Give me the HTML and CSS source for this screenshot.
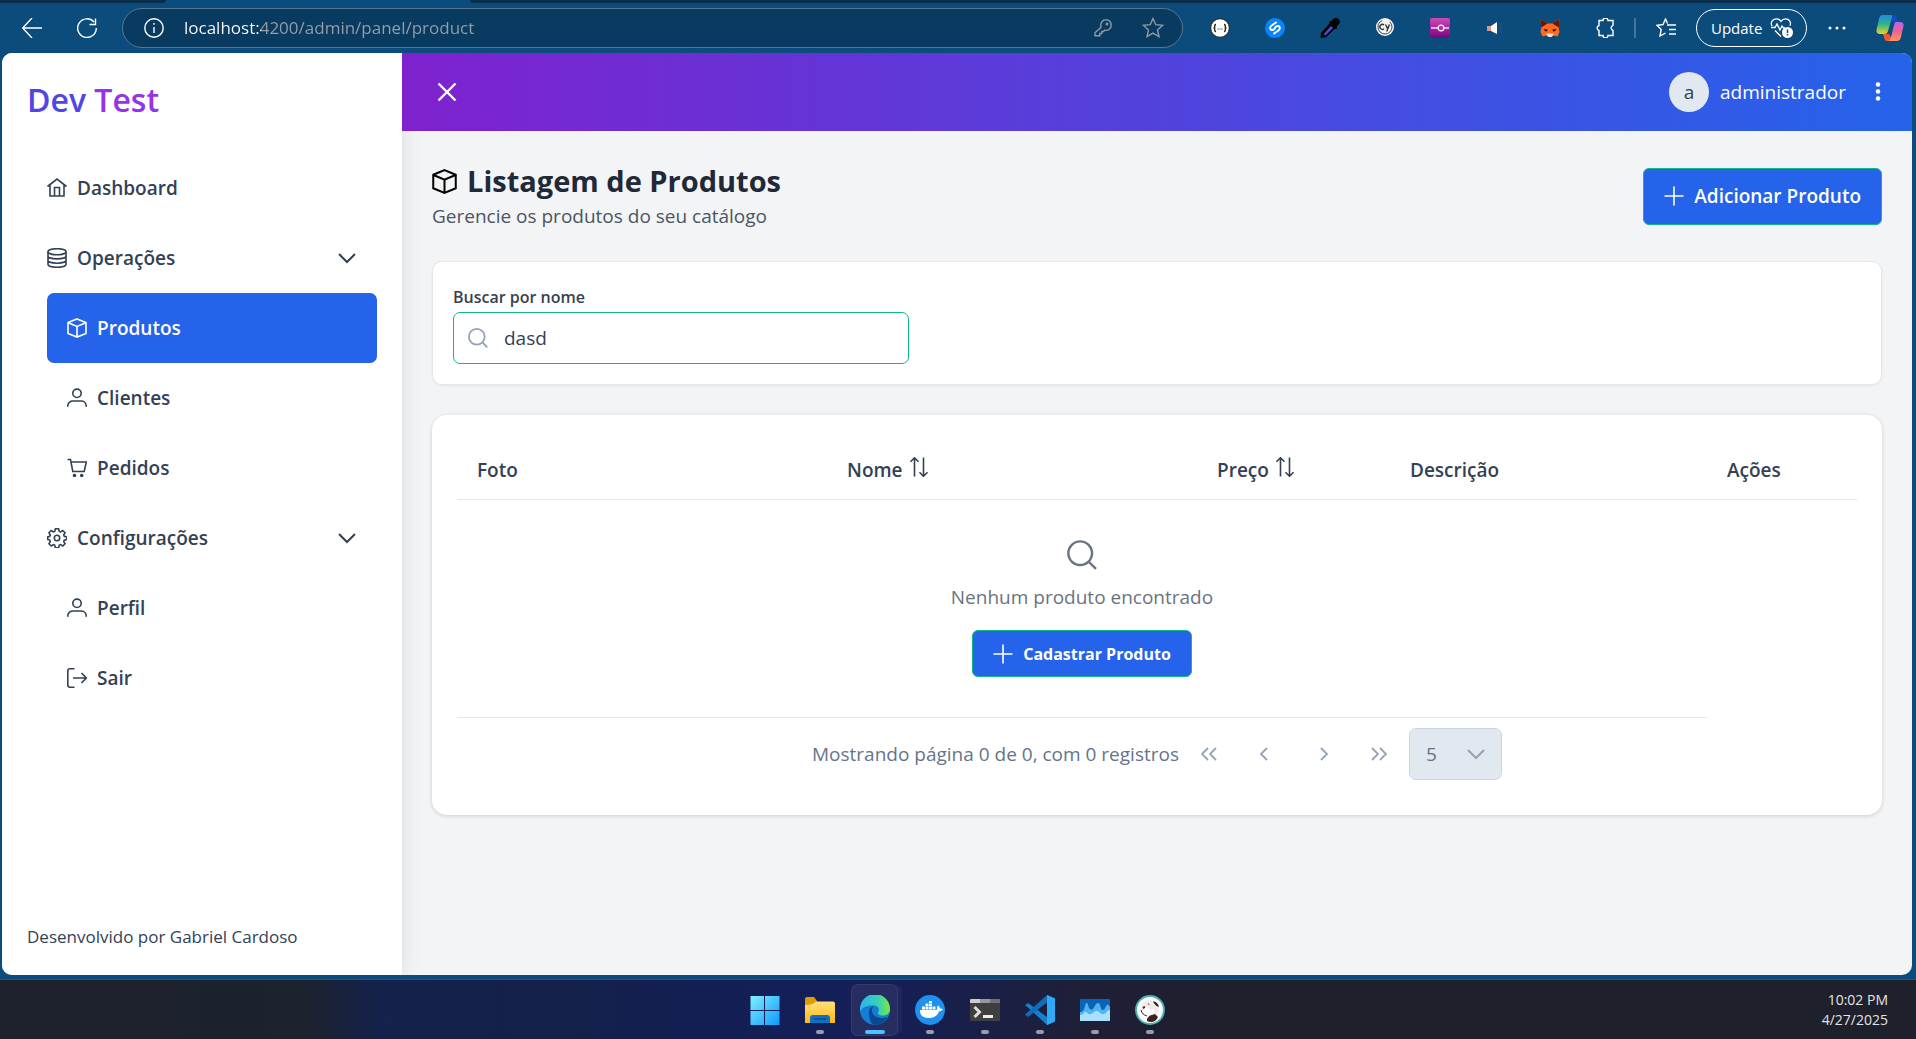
FILE: index.html
```html
<!DOCTYPE html>
<html lang="pt-BR">
<head>
<meta charset="utf-8">
<meta name="viewport" content="width=device-width, initial-scale=1">
<title>Dev Test</title>
<link rel="stylesheet" href="styles.css">
</head>
<body>
<svg class="sprite" width="0" height="0" aria-hidden="true">
  <symbol id="box" viewBox="0 0 20 20"><path d="M10 .9 19 4.6v10.8L10 19.1 1 15.4V4.6zM1.2 4.8 10 8.5l8.800-3.700M10 8.500v10.400"/></symbol>
  <symbol id="user" viewBox="0 0 20 20"><circle cx="10" cy="5.300" r="4.200"/><path d="M.8 18.800v-1c0-3 2.500-4.800 5.200-4.800h8c2.700 0 5.200 1.800 5.200 4.800v1"/></symbol>
  <symbol id="down" viewBox="0 0 20 20"><path d="m2 6 8 8 8-8"/></symbol>
  <symbol id="search" viewBox="0 0 20 20"><circle cx="8.800" cy="8.800" r="7.900"/><path d="m14.500 14.500 4.800 4.800"/></symbol>
  <symbol id="plus" viewBox="0 0 20 20"><path d="M10 .5v19M.5 10h19"/></symbol>
  <symbol id="sort" viewBox="0 0 20 20"><path d="M5.500 19.500V1M1.500 4.800l4-4 4 4M14.500.5V19M10.500 15.200l4 4 4-4"/></symbol>
</svg>

<header class="browser">
  <div class="tabs"><span class="tab-left"></span><span class="tab-right"></span></div>
  <div class="toolbar">
    <button class="tool" aria-label="Back"><svg class="line" width="20" height="20" viewBox="0 0 20 20"><path d="M10 0 .7 10 10 20M1 10h19"/></svg></button>
    <button class="tool" aria-label="Refresh"><svg class="line" width="20" height="20" viewBox="0 0 20 20"><path d="M19.300 10A9.300 9.300 0 1 1 17 4M18.500.5v6h-6"/></svg></button>
    <div class="address">
      <svg class="line" width="20" height="20" viewBox="0 0 20 20"><circle cx="10" cy="10" r="9.200"/><path d="M10 9v6M10 5v1.800"/></svg>
      <input class="url" type="text" aria-label="Address" value="localhost:4200/admin/panel/product">
      <svg class="line dim" width="18" height="18" viewBox="0 0 18 18"><path d="M7 8.200C6 4 8.500.8 12 .8a5 5 0 0 1 5.200 5.200c0 3.500-3 6-6.500 5.200L9.500 12.500H7.800v2H5.800v2.200H1v-3z"/><circle cx="13" cy="5" r=".8"/></svg>
      <svg class="line dim" width="22" height="22" viewBox="0 0 22 22"><path d="m11 1.500 2.800 6.200 6.700.7-5 4.500 1.500 6.700-6-3.500-6 3.500 1.500-6.700-5-4.500 6.700-.7z"/></svg>
    </div>
    <button class="tool" aria-label="JSON"><svg width="20" height="20" viewBox="0 0 20 20"><circle cx="10" cy="10" r="9.300" fill="#fff" stroke="#222"/><path d="M6 6.500c-2 0-1 2.500-1.300 3L4 10l.7.500c.3.500-.7 3 1.300 3M14 6.500c2 0 1 2.500 1.300 3l.7.500-.7.500c-.3.500.7 3-1.300 3" fill="none" stroke="#222" stroke-width="1.300"/><path d="M7.500 11h5" stroke="#222" stroke-dasharray="1 1"/></svg></button>
    <button class="tool" aria-label="Shazam"><svg width="20" height="20" viewBox="0 0 20 20"><circle cx="10" cy="10" r="10" fill="#0a84fb"/><path d="M11 4.500 7 7.200c-3 2-2.200 5.300.8 4.800L10 10.500M9 15.500l4-2.700c3-2 2.200-5.300-.8-4.800L10 9.500" fill="none" stroke="#fff" stroke-width="1.900" stroke-linecap="round"/></svg></button>
    <button class="tool" aria-label="Color picker"><svg width="20" height="20" viewBox="0 0 20 20"><path d="M1 19.500 1.500 15 11 4.500l5 4.500L6 18.500z" fill="#000" stroke="#000"/><path d="m4 16.500 7-8 1.500 1.500L5.500 17z" fill="#4b50d8" stroke="#4b50d8"/><path d="m9.500 4 2.500-1L14 .8q3-1.500 5 1.200 1.500 3-1 4.500l-1.500 1.500-.5 3z" fill="#000" stroke="#000"/></svg></button>
    <button class="tool" aria-label="Cypress"><svg width="20" height="20" viewBox="0 0 20 20"><circle cx="10" cy="9" r="9" fill="#f4f4f4"/><circle cx="10" cy="9" r="7" fill="none" stroke="#444" stroke-width="1" stroke-dasharray="30 8"/><path d="M9 7a2.500 2.500 0 1 0 0 3.800M10.500 6.500l2 4 2-4-2.800 7" fill="none" stroke="#333" stroke-width="1.400"/></svg></button>
    <button class="tool" aria-label="Commits"><svg width="20" height="20" viewBox="0 0 20 20"><defs><linearGradient id="pk" x2="0" y2="1"><stop stop-color="#cf49ba"/><stop offset="1" stop-color="#74077f"/></linearGradient></defs><rect width="20" height="20" rx="2" fill="url(#pk)"/><path d="M1 10h7m6 0h5" stroke="#f7d9f4" stroke-width="1.300"/><circle cx="11" cy="10" r="2.900" fill="#c02aa8" stroke="#fff" stroke-width="1.200"/></svg></button>
    <button class="tool" aria-label="Volume"><svg width="18" height="14" viewBox="0 0 18 14"><path d="M1 5h5v5H1z" fill="#d9958f"/><path d="M5 5 11 1v12L5 10z" fill="#fff"/><path d="m14 4 2-1.500M14 7h2m-2 3 2 1.500" stroke="#41556b"/></svg></button>
    <button class="tool" aria-label="MetaMask"><svg width="20" height="20" viewBox="0 0 20 20"><path d="m.5 1 7 4.500h5l7-4.500-.8 9 .8 4-2 4.500-4-1-2 1.500h-3l-2-1.500-4 1L.5 14l.8-4z" fill="#ff6a1f"/><path d="m.5 1 7 4.500-6.200 4zM19.500 1l-7 4.500 6.200 4z" fill="#6a1404"/><path d="m3.500 11 4 .5-.5 2-2-.5zM16.500 11l-4 .5.500 2 2-.5z" fill="#271506"/><path d="m6 16 2.500-.5h3L14 16l-2.500 3h-3z" fill="#e9dfd8"/></svg></button>
    <button class="tool" aria-label="Extensions"><svg class="line" width="20" height="20" viewBox="0 0 20 20"><path d="M4 2.500h4a2.500 2.500 0 0 1 5 0h5v4.800a2.600 2.600 0 0 0 0 5v5.200h-5a2.500 2.500 0 0 1-5 0H4v-5a2.600 2.600 0 0 1 0-5z"/></svg></button>
    <span class="divider"></span>
    <button class="tool" aria-label="Favorites"><svg class="line" width="20" height="20" viewBox="0 0 20 20"><path d="M11 7h9M13 11.500h7M13 16h7M11.500 5.500 9.500 1 7 6.500l-6 .8 4.200 4.200L4 18l5.500-3"/></svg></button>
    <button class="update"><span>Update</span><svg width="24" height="20" viewBox="0 0 24 20"><path d="M2 8C0 4 3 .8 6.500.8c2 0 3.500 1 4.500 2.500 1-1.500 2.500-2.500 4.500-2.500 3.500 0 6 3 4.500 7M1 9.500h4L7 6l3 6 2-4 1.500 2H15M5 12.500l6 6" fill="none" stroke="#fff" stroke-width="1.300"/><circle cx="17.500" cy="14.500" r="5.500" fill="#fff"/><path d="M17.500 11.500v3.500m0 1v1.500" stroke="#0c4c7c" stroke-width="1.500"/></svg></button>
    <button class="tool wide" aria-label="More"><svg width="18" height="4" viewBox="0 0 18 4" fill="#fff"><circle cx="2" cy="2" r="1.500"/><circle cx="9" cy="2" r="1.500"/><circle cx="16" cy="2" r="1.500"/></svg></button>
    <button class="tool narrow" aria-label="Copilot"><svg width="28" height="28" viewBox="0 0 28 28"><defs><linearGradient id="ca" x2="0" y2="1"><stop stop-color="#1c8bd8"/><stop offset=".5" stop-color="#35b58a"/><stop offset="1" stop-color="#e8d51c"/></linearGradient><linearGradient id="cb" x2="0" y2="1"><stop stop-color="#b266f0"/><stop offset=".5" stop-color="#f0618f"/><stop offset="1" stop-color="#ff9b5a"/></linearGradient></defs><path d="M13 1h5q2 0 2.500 2l1.500 5h-7z" fill="#1748c7"/><path d="M6 1h9q1.500 0 1 2l-4 14q-.8 3-3.500 3H4Q0 20 .5 16L3 5q1-4 3-4z" fill="url(#ca)"/><path d="M7 20h6l4 7h-6q-2 0-2.500-2z" fill="#f2582e"/><path d="M20 8h4q4 0 3.500 4L25 23q-1 4-4 4H12q2 0 2.800-3L18 11q.5-3 2-3z" fill="url(#cb)"/></svg></button>
  </div>
</header>

<div class="frame">
  <div class="app">
    <aside class="sidebar">
      <div class="logo"><span class="logo-a">Dev</span> <span class="logo-b">Test</span></div>
      <nav class="menu">
        <a class="item" href="#dashboard"><svg class="icon" viewBox="0 0 20 20"><path d="M.5 8.500 10 1l9.500 7.500M3 7v11h14V7M7.500 18V9.500h5V18"/></svg>Dashboard</a>
        <button class="item"><svg class="icon" viewBox="0 0 20 20"><ellipse cx="10" cy="3.700" rx="9" ry="3"/><path d="M1 3.700v12.600c0 1.700 4 3 9 3s9-1.300 9-3V3.700M1 7.900c0 1.700 4 3 9 3s9-1.300 9-3M1 12.200c0 1.700 4 3 9 3s9-1.300 9-3"/></svg>Operações<svg class="chevron"><use href="#down"/></svg></button>
        <a class="item sub active" href="#produtos"><svg class="icon"><use href="#box"/></svg>Produtos</a>
        <a class="item sub" href="#clientes"><svg class="icon"><use href="#user"/></svg>Clientes</a>
        <a class="item sub" href="#pedidos"><svg class="icon" viewBox="0 0 20 20"><path d="M.5 1.500h3l2.300 12h11.400L19.300 4H4"/><circle cx="7.500" cy="17.500" r="1" fill="currentColor"/><circle cx="14.700" cy="17.500" r="1" fill="currentColor"/></svg>Pedidos</a>
        <button class="item"><svg class="icon" viewBox="0 0 20 20"><path d="M8.300.8h3.400l.5 2.500 1.500.6 2.100-1.400 2.300 2.300-1.400 2.100.6 1.500 2.500.5v2.600l-2.500.6-.6 1.500 1.400 2.100-2.300 2.300-2.100-1.400-1.500.6-.5 2.500H8.300l-.5-2.500-1.500-.6-2.100 1.400-2.300-2.300 1.400-2.100-.6-1.500L.7 11.500V8.900l2-.5.6-1.500-1.400-2.100 2.300-2.300 2.100 1.400 1.500-.6z" stroke-linejoin="round"/><circle cx="10" cy="10" r="2.700"/></svg>Configurações<svg class="chevron"><use href="#down"/></svg></button>
        <a class="item sub" href="#perfil"><svg class="icon"><use href="#user"/></svg>Perfil</a>
        <a class="item sub" href="#sair"><svg class="icon" viewBox="0 0 20 20"><path d="M7.500.8H3Q.8.8.8 3v14q0 2.200 2.200 2.200h4.500M6 10h13M14.500 5l4.800 5-4.800 5"/></svg>Sair</a>
      </nav>
      <footer class="credit">Desenvolvido por Gabriel Cardoso</footer>
    </aside>

    <div class="panel">
      <header class="topbar">
        <button class="close" aria-label="Fechar menu"><svg width="20" height="20" viewBox="0 0 20 20"><path d="m1.500 1.500 17 17m0-17-17 17"/></svg></button>
        <div class="account">
          <span class="avatar">a</span>
          <span class="username">administrador</span>
          <button class="dots" aria-label="Opções"><svg width="6" height="20" viewBox="0 0 6 20"><circle cx="3" cy="2.500" r="2.300"/><circle cx="3" cy="9.500" r="2.300"/><circle cx="3" cy="16.500" r="2.300"/></svg></button>
        </div>
      </header>

      <main class="content">
        <section class="head">
          <div>
            <h1 class="title"><svg class="title-icon"><use href="#box"/></svg>Listagem de Produtos</h1>
            <p class="subtitle">Gerencie os produtos do seu catálogo</p>
          </div>
          <button class="primary large"><svg class="icon"><use href="#plus"/></svg>Adicionar Produto</button>
        </section>

        <section class="filter">
          <label class="label" for="busca">Buscar por nome</label>
          <div class="search">
            <svg class="icon"><use href="#search"/></svg>
            <input id="busca" type="text" value="dasd">
          </div>
        </section>

        <section class="list">
          <table class="table">
            <colgroup><col class="c-foto"><col class="c-nome"><col class="c-preco"><col class="c-desc"><col class="c-acoes"></colgroup>
            <thead>
              <tr>
                <th>Foto</th>
                <th><span class="sortable">Nome<svg class="icon"><use href="#sort"/></svg></span></th>
                <th><span class="sortable">Preço<svg class="icon"><use href="#sort"/></svg></span></th>
                <th>Descrição</th>
                <th>Ações</th>
              </tr>
            </thead>
            <tbody>
              <tr>
                <td colspan="4">
                  <div class="empty">
                    <svg class="empty-icon"><use href="#search"/></svg>
                    <p>Nenhum produto encontrado</p>
                    <button class="primary"><svg class="icon"><use href="#plus"/></svg>Cadastrar Produto</button>
                  </div>
                </td>
              </tr>
            </tbody>
          </table>
          <div class="paginator">
            <span>Mostrando página 0 de 0, com 0 registros</span>
            <button class="page" disabled aria-label="Primeira página"><svg width="16" height="14" viewBox="0 0 16 14"><path d="M7 1 1 7l6 6M15 1 9 7l6 6"/></svg></button>
            <button class="page" disabled aria-label="Página anterior"><svg width="8" height="14" viewBox="0 0 8 14"><path d="M7 1 1 7l6 6"/></svg></button>
            <span class="pages"></span>
            <button class="page" disabled aria-label="Próxima página"><svg width="8" height="14" viewBox="0 0 8 14"><path d="m1 1 6 6-6 6"/></svg></button>
            <button class="page" disabled aria-label="Última página"><svg width="16" height="14" viewBox="0 0 16 14"><path d="m1 1 6 6-6 6M9 1l6 6-6 6"/></svg></button>
            <div class="rows">
              <select disabled aria-label="Registros por página"><option>5</option></select>
              <svg class="icon"><use href="#down"/></svg>
            </div>
          </div>
        </section>
      </main>
    </div>
  </div>
</div>

<footer class="taskbar">
  <div class="apps">
    <button class="task" aria-label="Start"><svg viewBox="0 0 30 30"><defs><linearGradient id="wn" x2="1" y2="1"><stop stop-color="#7fefff"/><stop offset="1" stop-color="#0f98fb"/></linearGradient></defs><path d="M.5 1H14v14H.5zM15 1h14.500v14H15zM.5 16H14v14H.5zM15 16h14.500v14H15z" fill="url(#wn)"/></svg></button>
    <button class="task open" aria-label="Explorer"><svg viewBox="0 0 30 30"><defs><linearGradient id="fo" x2="0" y2="1"><stop stop-color="#ffe07a"/><stop offset="1" stop-color="#fdb915"/></linearGradient></defs><path d="M0 4q0-2 2-2h7l3 4v4H0z" fill="#e09b05"/><path d="M0 10q8 0 11-3.500h17q2 0 2 2V28H0z" fill="url(#fo)"/><path d="M5 28v-5q0-3 3-3h14q3 0 3 3v5z" fill="#0f6fc2"/><path d="M9 24h12" stroke="#0a4d8f" stroke-width="1.500"/></svg></button>
    <button class="task open active" aria-label="Edge"><svg viewBox="0 0 30 30"><defs><linearGradient id="ed" x2="1"><stop stop-color="#2fb3ee"/><stop offset=".6" stop-color="#37cfb8"/><stop offset="1" stop-color="#7de83b"/></linearGradient></defs><circle cx="15" cy="15" r="15" fill="#1280d2"/><path d="M0 14A15 15 0 0 1 30 14c0 5-4 6.500-7.500 6.500-4 0-5.500-2-4-4 1.500-3-1-6-5-6C7 10 2 12 0 17z" fill="url(#ed)"/><path d="M9 17c0-3 2-5.500 5-6-2 2-3 5-1 8s7 5.500 14.500 3C25 27 20 30 15 30c-4 0-6-6-6-13z" fill="#0b4794"/></svg></button>
    <button class="task open" aria-label="Docker"><svg viewBox="0 0 30 30"><circle cx="15" cy="15" r="15" fill="#1e90ee"/><path d="M5 15h16c1 0 1.500-1 1-3l1-1.500c1.500 1 2 2 2 3 1.500 0 2.300.3 3 .8-1 1.700-2.300 1.900-4 2C22.500 21 19 23 13.500 23 8 23 4.500 20 5 15z" fill="#fff"/><path d="M7 11.500h3v3H7zm3.500 0h3v3h-3zm3.500 0h3v3h-3zm3.500 0h3v3h-3zM10.500 8.500h3v2.500h-3zm3.500 0h3v2.500h-3zM14 6h3v2h-3z" fill="#fff"/></svg></button>
    <button class="task open" aria-label="Terminal"><svg viewBox="0 0 30 30"><path d="M0 5q0-1 1-1h28q1 0 1 1v20q0 1-1 1H1q-1 0-1-1z" fill="#3d3f41"/><path d="M0 5q0-1 1-1h9v4H0z" fill="#ccc"/><path d="M10 4h10v4H10z" fill="#999"/><path d="M20 4h9q1 0 1 1v3H20z" fill="#707274"/><path d="m4.500 12 5 5-5 5" fill="none" stroke="#ddd" stroke-width="3"/><path d="M13 21.500h10" stroke="#eee" stroke-width="3"/></svg></button>
    <button class="task open" aria-label="Code"><svg viewBox="0 0 30 30"><path d="m22 0 8 3.500v23L22 30 2.500 12 0 10.500 3 8l19 14z" fill="#1580cf"/><path d="M22 7.500 3 22 0 19.500 22 0z" fill="#0f6db8"/><path d="m22 0 8 3.500v23L22 30z" fill="#2fa8f5"/></svg></button>
    <button class="task open" aria-label="Monitor"><svg viewBox="0 0 30 30"><path d="M0 5q0-1 1-1h28q1 0 1 1v21H0z" fill="#0b63b8"/><path d="M0 17c3 0 4-2 5-6s2-4 3-1 2 6 5 4c2-3 3-6 5-6 3 0 2 7 5 7 3-1 2-4 4-5 2-1 2 1 3 2v14H0z" fill="#4fb3ee"/><path d="M0 20c4 0 4-4 6-3s2 3 5 2 3-3 6-3 2 3 6 3 3-4 7-4v11H0z" fill="#a9e0fb"/></svg></button>
    <button class="task open" aria-label="DBeaver"><svg viewBox="0 0 30 30"><circle cx="15" cy="15" r="14" fill="#fff" stroke="#4fb0ae" stroke-width="2"/><path d="M6 12c1-5 5-7 10-6.500 5 .5 7 5 7.500 9.500 0 3-1 4-3 5 0-3-1-4-2-6-3 1-5-1-6-2-2 0-3 1-3 3l-2 1q-2-1-1.500-4z" fill="#f0ebe7"/><path d="M12 26c-.5-2 1-4 3-5.500l5-1.500 3 3c-1 3-4 5-7 5q-2.500 0-4-1zM18 6.500c3 0 5.500 2 6 5.500l-2.500-1c-1.500-1.500-2.500-2.500-3.500-4.500zM7.500 12l2-1 .8 1.500-2 1.500zM12.500 9l1.500-.5.5 1.500z" fill="#3a2420"/><path d="M6 15c1 3.500 2.500 5 6 6" fill="none" stroke="#3a2420"/></svg></button>
  </div>
  <div class="clock"><time>10:02 PM</time><time>4/27/2025</time></div>
</footer>
</body>
</html>
```
FILE: styles.css
```css
* { box-sizing: border-box; }

body {
  margin: 0;
  min-height: 100vh;
  display: flex;
  flex-direction: column;
  background: #0c4c7c;
  color: #334155;
  font: 19px/30px "Open Sans", "Noto Sans", sans-serif;
}

h1, p { margin: 0; }
button, input, select { font: inherit; color: inherit; }
button { margin: 0; padding: 0; border: 0; background: none; }
a { color: inherit; text-decoration: none; }
svg { flex: none; display: block; }
.sprite { position: absolute; }

.icon {
  width: 20px;
  height: 20px;
  fill: none;
  stroke: currentColor;
  stroke-width: 1.6;
}

/* Browser bar */
.tabs { display: flex; justify-content: space-between; height: 3px; }
.tab-left, .tab-right { background: #082e4b; }
.tab-left { width: 166px; border-bottom-right-radius: 3px; }
.tab-right { flex: 1; margin-left: 304px; border-bottom-left-radius: 3px; }

.toolbar {
  display: flex;
  align-items: center;
  height: 50px;
  padding: 0 3px 0 4px;
}
.tool {
  flex: none;
  display: flex;
  align-items: center;
  justify-content: center;
  width: 55px;
  height: 40px;
}
.tool.wide { width: 60px; }
.tool.narrow { width: 46px; }
.line { fill: none; stroke: #fff; stroke-width: 1.4; }
.dim { stroke: #8f9ba5; }

.address {
  flex: 1;
  min-width: 0;
  display: flex;
  align-items: center;
  gap: 20px;
  height: 40px;
  margin: 0 9px 0 8px;
  padding: 0 18px 0 21px;
  border: 1px solid #547893;
  border-radius: 20px;
  background: #093a5f;
}
.address .dim:last-child { margin-left: 10px; }
.url {
  flex: 1;
  min-width: 0;
  padding: 0;
  border: 0;
  outline: 0;
  font-size: 17px;
  line-height: 24px;
  background: linear-gradient(90deg, #fff 77px, #96a0a8 77px);
  -webkit-background-clip: text;
  background-clip: text;
  color: transparent;
}
.divider { width: 2px; height: 20px; margin: 0 2px; background: #47759a; }
.update {
  flex: none;
  display: flex;
  align-items: center;
  justify-content: space-between;
  width: 111px;
  height: 38px;
  margin-left: 3px;
  padding: 0 12px 0 14px;
  border: 1px solid #fff;
  border-radius: 19px;
  color: #fff;
  font-size: 15px;
  line-height: 24px;
}

/* Page frame */
.frame { flex: 1; display: flex; padding: 0 4px 4px 2px; }
.app {
  flex: 1;
  min-width: 0;
  display: flex;
  overflow: hidden;
  border-radius: 10px;
  background: #f3f4f6;
}

/* Sidebar */
.sidebar {
  flex: none;
  display: flex;
  flex-direction: column;
  width: 400px;
  padding: 22px 25px 26px;
  background: #fff;
  box-shadow: 0 0 20px rgba(0, 0, 0, .1);
}
.logo {
  margin-bottom: 28px;
  font-size: 32px;
  font-weight: 600;
  line-height: 50px;
}
.logo-a { color: #4f46e5; }
.logo-b { color: #9333ea; }

.menu { display: flex; flex-direction: column; padding-left: 20px; }
.item {
  display: flex;
  align-items: center;
  gap: 10px;
  height: 70px;
  padding-right: 20px;
  border-radius: 7px;
  font-weight: 600;
}
.item.sub { padding-left: 20px; }
.item.active { background: #2563eb; color: #fff; }
.chevron {
  width: 20px;
  height: 20px;
  margin-left: auto;
  fill: none;
  stroke: currentColor;
  stroke-width: 2;
}
.credit { margin-top: auto; font-size: 17px; line-height: 24px; }

/* Top bar */
.panel { flex: 1; min-width: 0; display: flex; flex-direction: column; }
.topbar {
  position: relative;
  display: flex;
  align-items: center;
  justify-content: space-between;
  height: 78px;
  padding: 0 31px 0 35px;
  background: linear-gradient(90deg, #7e22ce, #2563eb);
  color: #fff;
}
.close svg { fill: none; stroke: #fff; stroke-width: 2.400; }
.account { display: flex; align-items: center; }
.avatar {
  width: 40px;
  height: 40px;
  margin-right: 11px;
  border-radius: 50%;
  background: #e2e8f0;
  color: #334155;
  line-height: 40px;
  text-align: center;
}
.dots { margin-left: 29px; }
.dots svg { fill: #fff; }

/* Content */
.content { padding: 30px; }
.head {
  display: flex;
  align-items: center;
  justify-content: space-between;
  margin-bottom: 30px;
}
.title {
  display: flex;
  align-items: center;
  gap: 10px;
  color: #1f2937;
  font-size: 29px;
  font-weight: 700;
  line-height: 40px;
}
.title-icon {
  width: 25px;
  height: 25px;
  fill: none;
  stroke: #000;
  stroke-width: 1.6;
}
.subtitle { color: #4b5563; }

.primary {
  display: flex;
  align-items: center;
  gap: 10px;
  height: 47px;
  padding: 0 20px;
  border: 1px solid #10b981;
  border-radius: 6px;
  background: #2563eb;
  color: #fff;
  font-size: 16px;
  font-weight: 700;
}
.primary.large { height: 57px; font-size: 19px; font-weight: 600; }

.filter {
  margin-bottom: 30px;
  padding: 20px;
  border: 1px solid #e5e7eb;
  border-radius: 10px;
  background: #fff;
  box-shadow: 0 1px 3px rgba(0, 0, 0, .06);
}
.label { display: block; color: #374151; font-size: 16px; font-weight: 600; }
.search { position: relative; width: 456px; max-width: 100%; }
.search .icon { position: absolute; top: 16px; left: 15px; color: #94a3b8; stroke-width: 1.800; }
.search input {
  display: block;
  width: 100%;
  height: 52px;
  padding: 0 16px 0 50px;
  border: 1px solid #10b981;
  border-radius: 7px;
  outline: 0;
  background: #fff;
}

.list {
  padding: 25px;
  border-radius: 15px;
  background: #fff;
  box-shadow: 0 1px 4px rgba(0, 0, 0, .16);
}
.table { width: 100%; table-layout: fixed; border-collapse: separate; border-spacing: 0; }
.c-foto, .c-nome { width: 370px; }
.c-preco { width: 193px; }
.c-desc { width: 317px; }
.c-acoes { width: 150px; }
.table th {
  height: 60px;
  padding: 0 20px;
  border-bottom: 1px solid #e2e8f0;
  font-weight: 600;
  text-align: left;
}
.sortable { display: flex; align-items: baseline; gap: 6px; }
.table td { padding: 40px 20px; border-bottom: 1px solid #e2e8f0; }
.empty { display: flex; flex-direction: column; align-items: center; gap: 12px; color: #6b7280; }
.empty-icon { width: 30px; height: 30px; fill: none; stroke: currentColor; stroke-width: 1.600; }
.empty .primary { margin-top: 6px; }

.paginator {
  display: flex;
  align-items: center;
  justify-content: center;
  gap: 5px;
  padding: 10px 0;
  color: #64748b;
}
.page { display: flex; align-items: center; justify-content: center; width: 50px; height: 50px; }
.page svg { fill: none; stroke: #94a3b8; stroke-width: 1.800; }
.rows { position: relative; }
.rows select {
  display: block;
  width: 93px;
  height: 52px;
  padding: 0 16px;
  border: 1px solid #cbd5e1;
  border-radius: 7px;
  appearance: none;
  background: #e2e8f0;
  color: #64748b;
  opacity: 1;
}
.rows .icon { position: absolute; top: 16px; right: 16px; color: #94a3b8; stroke-width: 2; }

/* Taskbar */
.taskbar {
  display: grid;
  grid-template-columns: 1fr auto 1fr;
  align-items: center;
  height: 60px;
  padding-right: 2px;
  border-top: 1px solid #4b4c52;
  background: linear-gradient(90deg, #1e222c 0, #1c222e 16%, #14224d 20%, #15204b 29%, #131f56 40%, #151f58 46%, #1e1f38 56%, #1e202c 64%);
}
.apps { grid-column: 2; display: flex; gap: 10px; }
.task {
  display: flex;
  flex-direction: column;
  align-items: center;
  width: 45px;
  height: 50px;
  padding-top: 10px;
  border-radius: 6px;
}
.task svg { width: 30px; height: 30px; }
.task.open::after {
  content: "";
  width: 8px;
  height: 4px;
  margin-top: 5px;
  border-radius: 2px;
  background: #9a9cae;
}
.task.active { background: #262d60; box-shadow: 0 0 0 1px #343a6a, 5px 0 0 0 #202758; }
.task.active::after { width: 20px; background: #4cc2ff; }
.clock {
  display: flex;
  flex-direction: column;
  align-items: flex-end;
  padding-right: 26px;
  color: #e4e4e6;
  font-size: 14px;
  line-height: 20px;
}
```
